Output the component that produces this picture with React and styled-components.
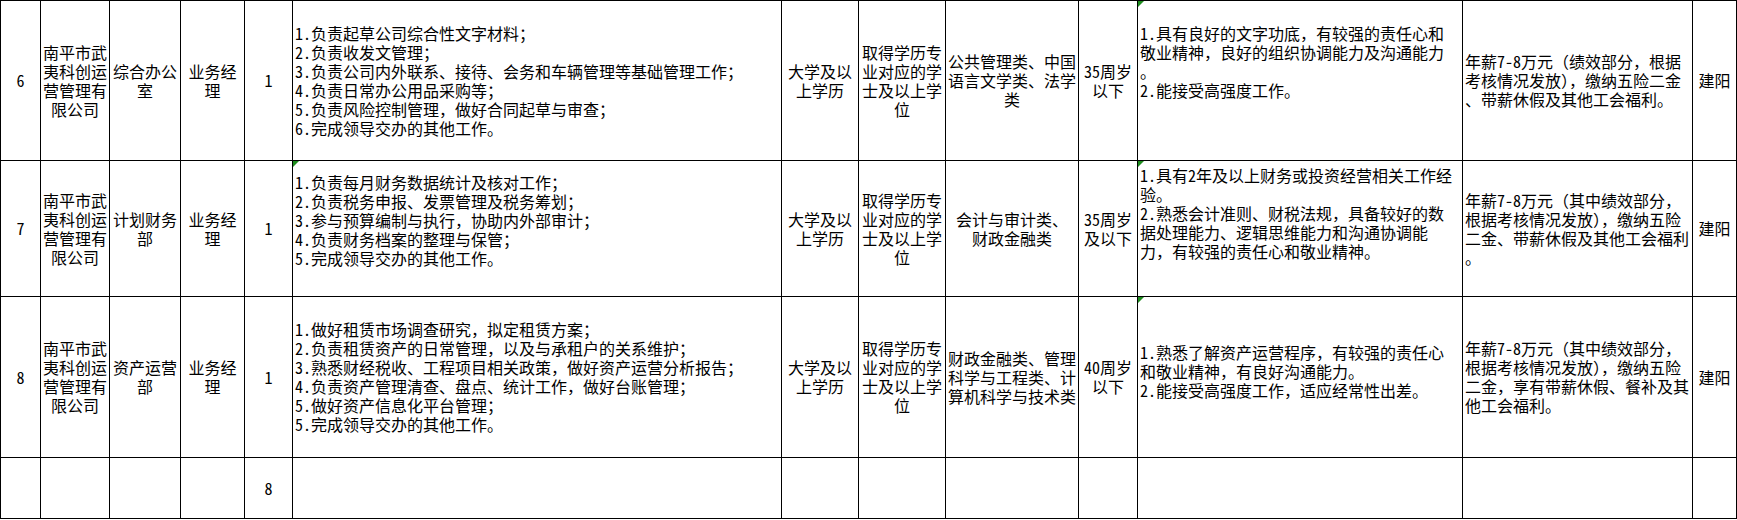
import styled, { createGlobalStyle, css } from "styled-components";

const GlobalStyle = createGlobalStyle`
  html, body {
    margin: 0;
    padding: 0;
    background: #fff;
  }
  body {
    font-family: "Noto Sans CJK SC", "Noto Sans", sans-serif;
  }
`;

const Sheet = styled.table`
  border-collapse: collapse;
  table-layout: fixed;
  width: 1737px;
  font-family: "Noto Sans CJK SC", "Noto Sans", sans-serif;
  font-size: 16px;
  line-height: 19px;
  color: #000;
`;

const Row = styled.tr`
  height: ${(p) => p.$h}px;
`;

const Cell = styled.td`
  position: relative;
  border: 1px solid #000;
  padding: 0 2px ${(p) => (p.$lift || 0) * 2}px;
  text-align: ${(p) => p.$align || "center"};
  vertical-align: middle;
  white-space: nowrap;
  overflow: hidden;

  ${(p) =>
    p.$flag &&
    css`
      &::before {
        content: "";
        position: absolute;
        top: 0;
        left: 0;
        border-style: solid;
        border-width: 6px 6px 0 0;
        border-color: #1e8c1e transparent transparent transparent;
      }
    `}
`;

const Line = styled.div`
  white-space: pre;
`;

// latin digits and dots take a half em, like the sheet's song font
const Half = styled.span`
  font-feature-settings: "hwid" 1;
`;

const TextLine = ({ text }) => (
  <Line>
    {text.split(/([\x20-\x7e]+)/).map((part, i) =>
      i % 2 ? <Half key={i}>{part}</Half> : part
    )}
  </Line>
);

const widths = [40, 69, 71, 64, 48, 489, 77, 87, 133, 59, 325, 230, 44];

const company = ["南平市武", "夷科创运", "营管理有", "限公司"];
const degree = ["大学及以", "上学历"];
const major = ["取得学历专", "业对应的学", "士及以上学", "位"];
const post = ["业务经", "理"];

const rows = [
  {
    h: 160,
    cells: [
      { t: ["6"] },
      { t: company },
      { t: ["综合办公", "室"] },
      { t: post },
      { t: ["1"] },
      {
        t: [
          "1.负责起草公司综合性文字材料；",
          "2.负责收发文管理；",
          "3.负责公司内外联系、接待、会务和车辆管理等基础管理工作；",
          "4.负责日常办公用品采购等；",
          "5.负责风险控制管理，做好合同起草与审查；",
          "6.完成领导交办的其他工作。",
        ],
        align: "left",
      },
      { t: degree },
      { t: major },
      { t: ["公共管理类、中国", "语言文学类、法学", "类"] },
      { t: ["35周岁", "以下"] },
      {
        t: [
          "1.具有良好的文字功底，有较强的责任心和",
          "敬业精神，良好的组织协调能力及沟通能力",
          "。",
          "2.能接受高强度工作。",
        ],
        align: "left",
        flag: true,
        lift: 19,
      },
      {
        t: [
          "年薪7-8万元（绩效部分，根据",
          "考核情况发放），缴纳五险二金",
          "、带薪休假及其他工会福利。",
        ],
        align: "left",
      },
      { t: ["建阳"] },
    ],
  },
  {
    h: 136,
    cells: [
      { t: ["7"] },
      { t: company },
      { t: ["计划财务", "部"] },
      { t: post },
      { t: ["1"] },
      {
        t: [
          "1.负责每月财务数据统计及核对工作；",
          "2.负责税务申报、发票管理及税务筹划；",
          "3.参与预算编制与执行，协助内外部审计；",
          "4.负责财务档案的整理与保管；",
          "5.完成领导交办的其他工作。",
        ],
        align: "left",
        flag: true,
        lift: 8,
      },
      { t: degree },
      { t: major },
      { t: ["会计与审计类、", "财政金融类"] },
      { t: ["35周岁", "及以下"] },
      {
        t: [
          "1.具有2年及以上财务或投资经营相关工作经",
          "验。",
          "2.熟悉会计准则、财税法规，具备较好的数",
          "据处理能力、逻辑思维能力和沟通协调能",
          "力，有较强的责任心和敬业精神。",
        ],
        align: "left",
        flag: true,
        lift: 15,
      },
      {
        t: [
          "年薪7-8万元（其中绩效部分，",
          "根据考核情况发放），缴纳五险",
          "二金、带薪休假及其他工会福利",
          "。",
        ],
        align: "left",
      },
      { t: ["建阳"] },
    ],
  },
  {
    h: 161,
    cells: [
      { t: ["8"] },
      { t: company },
      { t: ["资产运营", "部"] },
      { t: post },
      { t: ["1"] },
      {
        t: [
          "1.做好租赁市场调查研究，拟定租赁方案；",
          "2.负责租赁资产的日常管理，以及与承租户的关系维护；",
          "3.熟悉财经税收、工程项目相关政策，做好资产运营分析报告；",
          "4.负责资产管理清查、盘点、统计工作，做好台账管理；",
          "5.做好资产信息化平台管理；",
          "5.完成领导交办的其他工作。",
        ],
        align: "left",
      },
      { t: degree },
      { t: major },
      { t: ["财政金融类、管理", "科学与工程类、计", "算机科学与技术类"] },
      { t: ["40周岁", "以下"] },
      {
        t: [
          "1.熟悉了解资产运营程序，有较强的责任心",
          "和敬业精神，有良好沟通能力。",
          "2.能接受高强度工作，适应经常性出差。",
        ],
        align: "left",
        flag: true,
        lift: 6,
      },
      {
        t: [
          "年薪7-8万元（其中绩效部分，",
          "根据考核情况发放），缴纳五险",
          "二金，享有带薪休假、餐补及其",
          "他工会福利。",
        ],
        align: "left",
      },
      { t: ["建阳"] },
    ],
  },
  {
    h: 61,
    cells: [
      { t: [] },
      { t: [] },
      { t: [] },
      { t: [] },
      { t: ["8"] },
      { t: [] },
      { t: [] },
      { t: [] },
      { t: [] },
      { t: [] },
      { t: [] },
      { t: [] },
      { t: [] },
    ],
  },
];

const App = () => {
  return (
    <>
      <GlobalStyle />
      <Sheet>
        <colgroup>
          {widths.map((w, i) => (
            <col key={i} style={{ width: w }} />
          ))}
        </colgroup>
        <tbody>
          {rows.map((row, r) => (
            <Row key={r} $h={row.h}>
              {row.cells.map((c, i) => (
                <Cell key={i} $align={c.align} $flag={c.flag} $lift={c.lift}>
                  {c.t.map((line, k) => (
                    <TextLine key={k} text={line} />
                  ))}
                </Cell>
              ))}
            </Row>
          ))}
        </tbody>
      </Sheet>
    </>
  );
};

export default App;
